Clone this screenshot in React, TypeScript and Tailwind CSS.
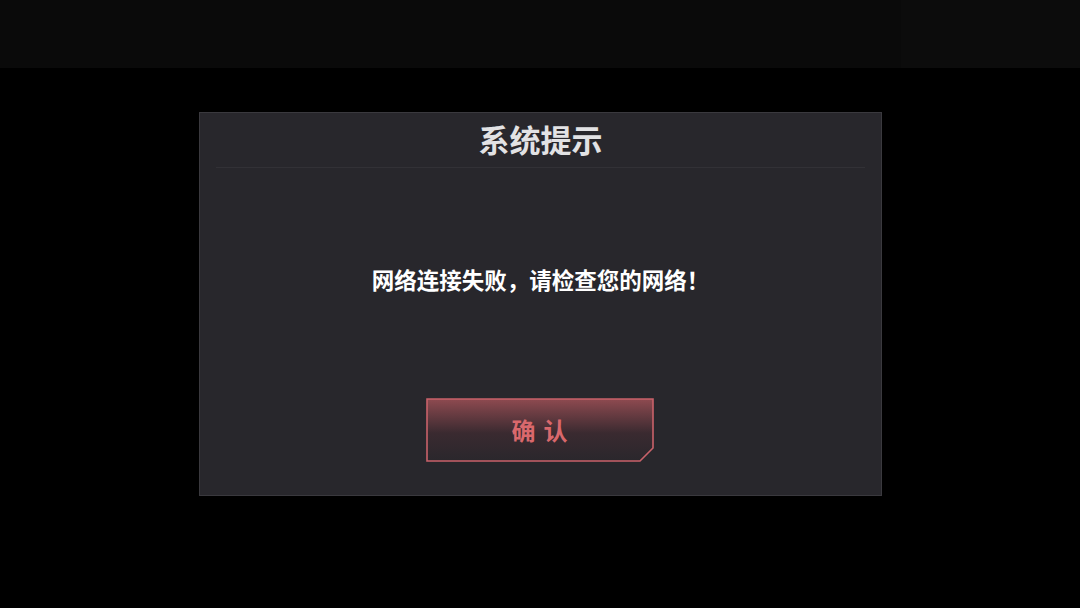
import React from "react";

const cjk = { fontFamily: '"Noto Sans CJK SC", "Noto Sans", sans-serif' };

function ConfirmButton() {
  return (
    <button className="relative w-[228px] h-[64px] flex items-center justify-center" style={cjk}>
      <svg className="absolute inset-0" width="228" height="64" viewBox="0 0 228 64">
        <defs>
          <linearGradient id="btnFill" x1="0" y1="0" x2="0" y2="1">
            <stop offset="0" stopColor="#8e4a50" />
            <stop offset="0.55" stopColor="#3a2a30" />
            <stop offset="1" stopColor="#2a272c" />
          </linearGradient>
        </defs>
        <path
          d="M1 1 H227 V50 L214 63 H1 Z"
          fill="url(#btnFill)"
          stroke="#c9626a"
          strokeWidth="1.6"
        />
      </svg>
      <span className="relative text-[24px] font-bold tracking-[8px] pl-[8px] text-[#d9686c]">确认</span>
    </button>
  );
}

export default function App() {
  return (
    <div className="w-[1080px] h-[608px] bg-black flex flex-col overflow-hidden" style={cjk}>
      <div className="h-[68px] flex shrink-0">
        <div className="flex-1 bg-[#0a0a0a]" />
        <div className="w-[179px] bg-[#0c0c0c]" />
      </div>

      <div className="pl-[199px] pt-[44px]">
        <div className="w-[683px] h-[384px] bg-[#28272c] border border-[#3a393e] flex flex-col">
          <div className="mx-[16px] h-[55px] border-b border-[#323136] flex items-center justify-center pb-[3px]">
            <h1 className="text-[31px] font-bold text-[#e2e2e4] leading-none">系统提示</h1>
          </div>
          <div className="h-[122px] flex items-end justify-center">
            <p className="text-[22.5px] font-bold text-white leading-none">网络连接失败，请检查您的网络！</p>
          </div>
          <div className="flex justify-center pt-[108px] pr-[2px]">
            <ConfirmButton />
          </div>
        </div>
      </div>
    </div>
  );
}
